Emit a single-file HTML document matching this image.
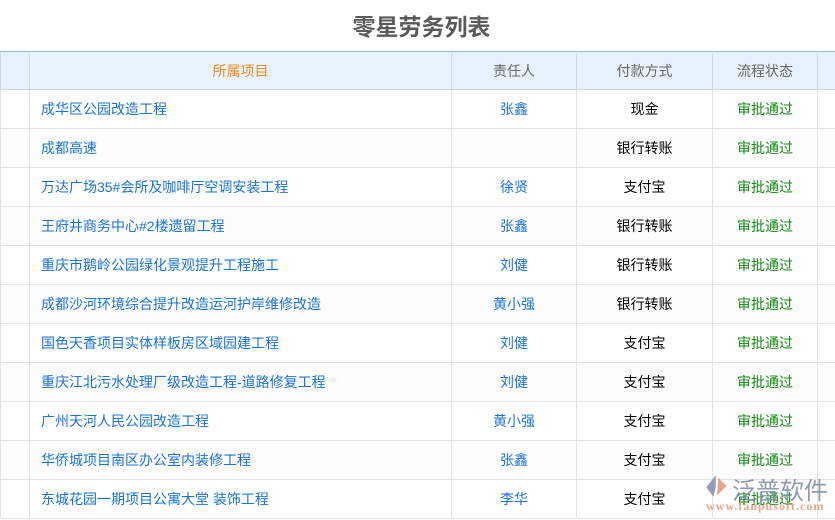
<!DOCTYPE html>
<html><head><meta charset="utf-8"><style>
body{margin:0;width:835px;height:520px;overflow:hidden;background:#fff;font-family:"Liberation Sans","Noto Sans CJK SC",sans-serif;font-size:14px;position:relative}
.t{position:absolute;top:8px;left:0;width:843px;text-align:center;font-size:23px;font-weight:bold;color:#5a5a5a}
table{position:absolute;top:51px;left:0;border-collapse:collapse;table-layout:fixed;width:835px}
td,th{border:1px solid #e3e3e3;height:38px;padding:0;text-align:center;font-weight:normal}
th{background:#e6f1fc;color:#666;border-color:#c5daef;border-top:1px solid #8ab8e0;height:37px}
th.o{color:#f08a1a;background:#eaf4ff}
td.p{text-align:left;padding-left:11px;color:#1a73d9}
td.n{color:#1a73d9}
td.s{color:#138a13}
tr:nth-child(odd) td{background:#fdfcfd}
</style></head><body>
<div class="t">零星劳务列表</div>
<table>
<colgroup><col style="width:29px"><col style="width:422px"><col style="width:125px"><col style="width:136px"><col style="width:105px"><col style="width:18px"></colgroup>
<tr><th></th><th class="o">所属项目</th><th>责任人</th><th>付款方式</th><th>流程状态</th><th></th></tr>
<tr><td></td><td class="p">成华区公园改造工程</td><td class="n">张鑫</td><td>现金</td><td class="s">审批通过</td><td></td></tr>
<tr><td></td><td class="p">成都高速</td><td class="n"></td><td>银行转账</td><td class="s">审批通过</td><td></td></tr>
<tr><td></td><td class="p">万达广场35#会所及咖啡厅空调安装工程</td><td class="n">徐贤</td><td>支付宝</td><td class="s">审批通过</td><td></td></tr>
<tr><td></td><td class="p">王府井商务中心#2楼遗留工程</td><td class="n">张鑫</td><td>银行转账</td><td class="s">审批通过</td><td></td></tr>
<tr><td></td><td class="p">重庆市鹅岭公园绿化景观提升工程施工</td><td class="n">刘健</td><td>银行转账</td><td class="s">审批通过</td><td></td></tr>
<tr><td></td><td class="p">成都沙河环境综合提升改造运河护岸维修改造</td><td class="n">黄小强</td><td>银行转账</td><td class="s">审批通过</td><td></td></tr>
<tr><td></td><td class="p">国色天香项目实体样板房区域园建工程</td><td class="n">刘健</td><td>支付宝</td><td class="s">审批通过</td><td></td></tr>
<tr><td></td><td class="p">重庆江北污水处理厂级改造工程-道路修复工程</td><td class="n">刘健</td><td>支付宝</td><td class="s">审批通过</td><td></td></tr>
<tr><td></td><td class="p">广州天河人民公园改造工程</td><td class="n">黄小强</td><td>支付宝</td><td class="s">审批通过</td><td></td></tr>
<tr><td></td><td class="p">华侨城项目南区办公室内装修工程</td><td class="n">张鑫</td><td>支付宝</td><td class="s">审批通过</td><td></td></tr>
<tr><td></td><td class="p">东城花园一期项目公寓大堂 装饰工程</td><td class="n">李华</td><td>支付宝</td><td class="s">审批通过</td><td></td></tr>
</table>
<div style="position:absolute;left:705px;top:474px;width:24px;height:24px;opacity:.8">
<svg width="24" height="24" viewBox="0 0 20 20"><path d="M9 1 L1 11 L7 19 L9 11 Z" fill="#7b8aa8"/><path d="M11 3 L18 10 L10 18 Z" fill="#e09070"/></svg></div>
<div style="position:absolute;left:732px;top:471px;font-size:24px;white-space:nowrap;color:#7b8aa8;opacity:.85">泛普软件</div>
<div style="position:absolute;left:706px;top:499px;font-size:12px;white-space:nowrap;color:#e09070;font-family:'Liberation Serif',serif;font-weight:bold;opacity:.8;letter-spacing:1px">www.fanpusoft.com</div>
</body></html>
